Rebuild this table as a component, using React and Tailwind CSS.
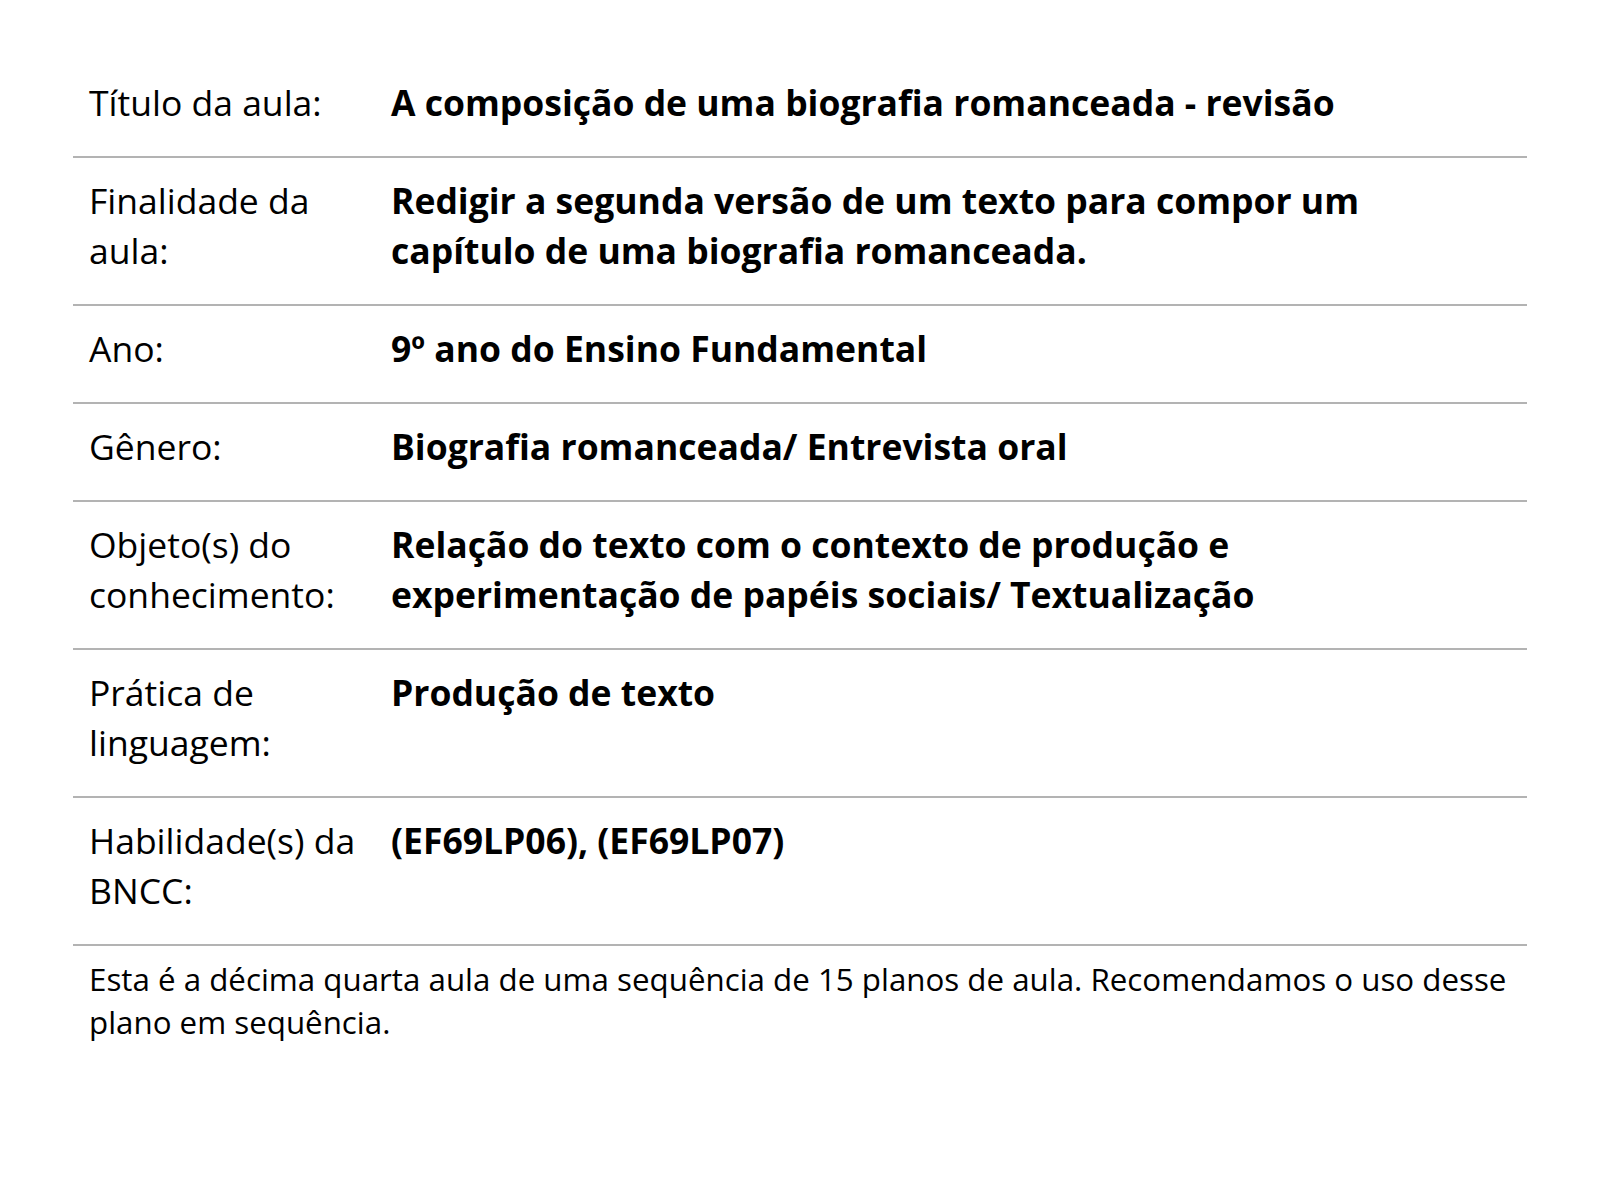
import React from "react";

const rows = [
  ["Título da aula:", "A composição de uma biografia romanceada - revisão"],
  ["Finalidade da aula:", "Redigir a segunda versão de um texto para compor um capítulo de uma biografia romanceada."],
  ["Ano:", "9º ano do Ensino Fundamental"],
  ["Gênero:", "Biografia romanceada/ Entrevista oral"],
  ["Objeto(s) do conhecimento:", "Relação do texto com o contexto de produção e experimentação de papéis sociais/ Textualização"],
  ["Prática de linguagem:", "Produção de texto"],
  ["Habilidade(s) da BNCC:", "(EF69LP06), (EF69LP07)"],
];

export default function App() {
  return (
    <div className="min-h-[1200px] bg-white text-black" style={{ fontFamily: '"Open Sans", "Noto Sans", sans-serif' }}>
      <div className="mx-auto w-[1454px] pt-[60px]">
        {rows.map(([k, v], i) => (
          <div key={i} className="flex border-b-2 border-[#b3b3b3]">
            <div className="w-[302px] shrink-0 pl-[16px] pr-[16px] pt-[17px] pb-[29px] text-[35.5px] leading-[50px]">{k}</div>
            <div className="pl-[16px] pr-[16px] pt-[17px] pb-[29px] text-[35.5px] leading-[50px] font-bold w-[1052px]">{v}</div>
          </div>
        ))}
        <p className="pl-[16px] pr-0 pt-[12px] text-[31.3px] leading-[43px]">
          Esta é a décima quarta aula de uma sequência de 15 planos de aula. Recomendamos o uso desse plano em sequência.
        </p>
      </div>
    </div>
  );
}
